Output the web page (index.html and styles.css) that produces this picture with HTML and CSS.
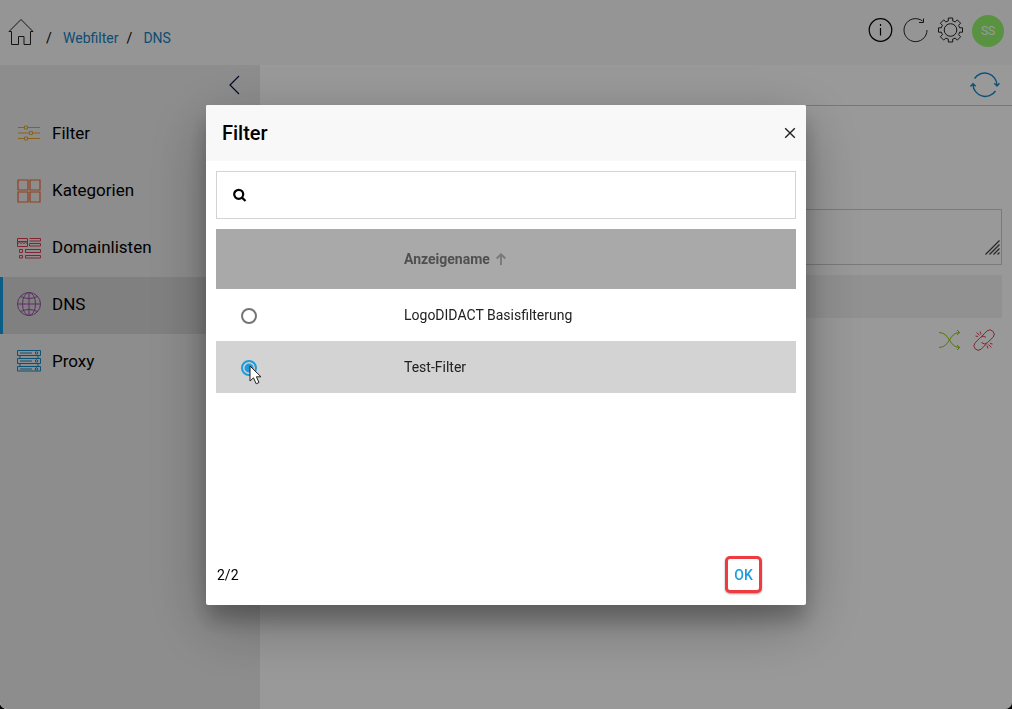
FILE: index.html
```html
<!DOCTYPE html>
<html lang="de">
<head>
<meta charset="utf-8">
<title>Webfilter – DNS</title>
<link rel="stylesheet" href="styles.css">
</head>
<body>
<div class="app">
  <header class="topbar">
    <nav class="breadcrumb" aria-label="Breadcrumb">
      <a href="#" class="home" aria-label="Startseite">
        <svg width="26" height="28" viewBox="0 0 26 28"><path d="M1 13.500 13 1.500 25 13.500H22.500V26.500H16V18.500H10.500V26.500H3.500V13.500Z"/></svg>
      </a>
      <span class="slash">/</span>
      <a href="#">Webfilter</a>
      <span class="slash">/</span>
      <a href="#">DNS</a>
    </nav>
    <div class="tools">
      <button type="button" class="icon-btn" aria-label="Information">
        <svg class="dark" width="25" height="25" viewBox="0 0 25 25"><circle cx="12.500" cy="12" r="11.300"/><path d="M12.500 10V17.500"/><path d="M12.500 6V8"/></svg>
      </button>
      <button type="button" class="icon-btn" aria-label="Neu laden">
        <svg width="25" height="25" viewBox="0 0 25 25"><path d="M24 12A11.500 11.500 0 1 1 19.500 3"/><path d="M16 4.500H20.500V.500"/></svg>
      </button>
      <button type="button" class="icon-btn" aria-label="Einstellungen">
        <svg width="26" height="26" viewBox="0 0 26 26"><circle cx="12.500" cy="12" r="6.300"/><path d="M10.300 0h4.400v2.900l2.500 1 2.100-2 3.300 3.300-2 2.100 1 2.500H24.500v4.400h-2.900l-1 2.500 2 2.100-3.300 3.300-2.100-2-2.500 1V24h-4.400v-2.900l-2.500-1-2.100 2-3.300-3.300 2-2.100-1-2.500H.500v-4.400h2.900l1-2.500-2-2.100 3.300-3.300 2.100 2 2.500-1Z"/></svg>
      </button>
      <button type="button" class="avatar">SS</button>
    </div>
  </header>

  <div class="body">
    <aside class="sidebar">
      <div class="collapse">
        <button type="button" class="icon-btn" aria-label="Menü einklappen">
          <svg class="navy" width="12" height="20" viewBox="0 0 12 20"><path d="M11 1 2 10 11 19"/></svg>
        </button>
      </div>
      <nav class="menu">
        <a href="#" class="item">
          <svg class="i-yellow" width="26" height="26" viewBox="0 0 26 26"><path d="M2 7.500H8M12 7.500H24M2 13H13M17 13H24M2 18.500H8M12 18.500H24"/><path d="M8.500 6h3v3h-3zM13.500 11.500h3v3h-3zM8.500 17h3v3h-3z"/></svg>
          <span>Filter</span>
        </a>
        <a href="#" class="item">
          <svg class="i-orange" width="26" height="26" viewBox="0 0 26 26"><path d="M2 3h10v10H2zM14 3h10v10H14zM2 15h10v10H2zM14 15h10v10H14z"/></svg>
          <span>Kategorien</span>
        </a>
        <a href="#" class="item">
          <svg class="i-red" width="26" height="26" viewBox="0 0 26 26"><path d="M1.500 4.500h10v8h-10z"/><path d="M2 9.500l1.500-1 1.500 1 1.500-1 1.500 1 1.500-1 1.500 1M2 7.500H11"/><path d="M24.500 4.500v2.500h-11M13.500 4.500h11M13.500 9.500h11v2.500h-11zM3.500 15.500h3v3h-3zM9.500 15.500h15v3h-15zM3.500 21.500h3v2.500h-3zM9.500 21.500h15v2.500h-15z"/></svg>
          <span>Domainlisten</span>
        </a>
        <a href="#" class="item active" aria-current="page">
          <svg class="i-purple" width="26" height="26" viewBox="0 0 26 26"><circle cx="13" cy="13" r="11.500"/><ellipse cx="13" cy="13" rx="6.500" ry="11.500"/><path d="M13 1.500v23M1.500 13h23M4.500 5.500q8.500 4 17 0M4.500 20.500q8.500-4 17 0"/></svg>
          <span>DNS</span>
        </a>
        <a href="#" class="item">
          <svg class="i-blue" width="26" height="26" viewBox="0 0 26 26"><path d="M1.500 2.500h23v5h-23zM1.500 10.500h23v5h-23zM1.500 18.500h23v4.500h-23z"/><path d="M4 5H16M4 13H16M4 21H16M4 8V10M22 8V10M4 16V18M22 16V18"/><circle cx="20.500" cy="5" r="1.200"/><circle cx="20.500" cy="13" r="1.200"/><circle cx="20.500" cy="21" r="1.200"/></svg>
          <span>Proxy</span>
        </a>
      </nav>
    </aside>

    <main class="main">
      <div class="toolbar">
        <button type="button" class="icon-btn" aria-label="Aktualisieren">
          <svg class="i-blue wide" width="30" height="28" viewBox="0 0 30 28"><path d="M4.500 7.500A12.300 12.300 0 0 1 27 14.500M24.300 12.300 27 15 29.500 12.300M25.500 20A12.300 12.300 0 0 1 3 13.500M.500 15.500 3 12.700 5.700 15.300"/></svg>
        </button>
      </div>
      <div class="content">
        <div class="note">
          <textarea aria-label="Beschreibung"></textarea>
          <svg class="grip" width="15" height="15" viewBox="0 0 15 15"><path d="M.500 14.500 14.500 .500M4.500 14.500l10-10M8.500 14.500l6-6M12.500 14.500l2-2"/></svg>
        </div>
        <div class="panel"></div>
        <div class="row-tools">
          <button type="button" class="icon-btn" aria-label="Zuordnen">
            <svg class="i-green" width="23" height="20" viewBox="0 0 23 20"><path d="M1 2.500C12 2.500 11 17.500 21.500 17.500M1 17.500C12 17.500 11 2.500 21.500 2.500M19 0l2.700 2.500L19 5M19 15l2.700 2.500L19 20"/></svg>
          </button>
          <button type="button" class="icon-btn" aria-label="Verknüpfung lösen">
            <svg class="i-red" width="24" height="24" viewBox="0 0 24 24"><path d="M9.500 8.500 15.200 2.800A4.400 4.400 0 0 1 21.300 9L15.500 14.700A4.400 4.400 0 0 1 9.500 14.500"/><path d="M14 9.300A4.400 4.400 0 0 0 8.300 9.500L2.800 15.200A4.400 4.400 0 0 0 9 21.300L14.500 15.800"/><path d="M8 3.500 9 6.500M4.500 4.500 7.500 7.500M3.500 8 6 8.500M16 20.500 15 17.500M19.500 19.500 16.500 16.500M20.500 16 18 15.500"/></svg>
          </button>
        </div>
      </div>
    </main>
  </div>

  <div class="overlay">
    <section class="dialog" role="dialog" aria-modal="true" aria-labelledby="dialog-title">
      <header class="dialog-head">
        <h1 id="dialog-title">Filter</h1>
        <button type="button" class="icon-btn" aria-label="Schließen">
          <svg class="close" width="12" height="12" viewBox="0 0 12 12"><path d="M1.200 1.200 10.800 10.800M10.800 1.200 1.200 10.800"/></svg>
        </button>
      </header>
      <div class="dialog-body">
        <label class="search">
          <svg width="14" height="14" viewBox="0 0 14 14"><circle cx="5.700" cy="6.300" r="4.500"/><path d="M9 9.600 12.500 13"/></svg>
          <input type="text" aria-label="Suchen">
        </label>
        <table class="grid">
          <thead>
            <tr>
              <th class="pick"></th>
              <th><span class="sort">Anzeigename <svg width="10" height="12" viewBox="0 0 10 12"><path d="M5 12V1.500M.700 5.500 5 1.200 9.300 5.500"/></svg></span></th>
            </tr>
          </thead>
          <tbody>
            <tr>
              <td class="pick"><input type="radio" name="filter" id="f-basis"></td>
              <td><label for="f-basis">LogoDIDACT Basisfilterung</label></td>
            </tr>
            <tr class="selected">
              <td class="pick">
                <input type="radio" name="filter" id="f-test" checked>
                <svg class="cursor" width="13" height="20" viewBox="0 0 13 20"><path d="M1 1V16L4.500 12.800 7.200 18.800 10 17.500 7.400 11.800H12Z"/></svg>
              </td>
              <td><label for="f-test">Test-Filter</label></td>
            </tr>
          </tbody>
        </table>
      </div>
      <footer class="dialog-foot">
        <span>2/2</span>
        <button type="button" class="ok">OK</button>
      </footer>
    </section>
  </div>
</div>
</body>
</html>
```
FILE: styles.css
```css
* { box-sizing: border-box; }

body {
  margin: 0;
  background: #000;
  color: #000;
  font-family: Roboto, "Noto Sans", sans-serif;
  font-size: 14px;
}

a { color: inherit; text-decoration: none; }

svg { display: block; fill: none; stroke: #222; stroke-width: 1; overflow: visible; }
svg.dark { stroke: #000; stroke-width: 1.2; }
svg.navy { stroke: #001040; stroke-width: 1.2; }
.i-yellow { stroke: #e8a628; }
.i-orange { stroke: #f06a32; stroke-width: 1.2; }
.i-red { stroke: #dc3c50; }
.i-purple { stroke: #9b4fa8; }
.i-blue { stroke: #1489c6; }
.i-green { stroke: #84c800; }
.wide { stroke-width: 1.4; }

.icon-btn {
  display: block;
  padding: 0;
  border: 0;
  background: none;
}

.app {
  display: flex;
  flex-direction: column;
  min-height: 100vh;
  overflow: hidden;
  border-radius: 0 0 7px 7px;
  background: #fff;
}

.topbar {
  display: flex;
  justify-content: space-between;
  height: 65px;
  padding: 0 8px;
  background: #f8f8f8;
}

.breadcrumb {
  display: flex;
  align-items: center;
  gap: 12px;
  padding-top: 11px;
  color: #1482be;
}
.breadcrumb .home { padding-bottom: 12px; }
.slash { width: 5px; color: #000; }
.breadcrumb a + .slash { margin-left: -4px; }
.breadcrumb .home + .slash { margin-left: 0; }

.tools {
  display: flex;
  align-items: center;
  gap: 10px;
  padding-bottom: 4px;
}
.avatar {
  width: 32px;
  height: 32px;
  margin-left: -2px;
  padding: 0;
  border: 0;
  border-radius: 50%;
  background: #94f56d;
  color: #fff;
  font: 12px Roboto, sans-serif;
}

.body { display: flex; flex: 1; }

.sidebar { flex: 0 0 260px; background: #ebebeb; }
.collapse {
  display: flex;
  justify-content: flex-end;
  align-items: center;
  height: 40px;
  padding-right: 20px;
}
.menu { display: flex; flex-direction: column; padding-top: 1px; }
.item {
  display: flex;
  align-items: center;
  gap: 10px;
  height: 57px;
  padding: 0 0 4px 13px;
  border-left: 3px solid transparent;
  font-size: 17px;
}
.active { border-left-color: #0f9be0; background: #d6d6d6; }

.main { flex: 1; min-width: 0; }
.toolbar {
  display: flex;
  justify-content: flex-end;
  align-items: center;
  height: 41px;
  padding-right: 12px;
  border-bottom: 1px solid #c8c8c8;
}
.content { padding: 103px 10px 0; }
.note { position: relative; }
.note textarea {
  display: block;
  width: 100%;
  height: 56px;
  border: 1px solid #ccc;
  background: #fff;
  resize: none;
}
.grip { position: absolute; right: 2px; bottom: 10px; stroke: #444; stroke-width: 1.3; }
.panel { height: 43px; margin-top: 10px; background: #f2f2f2; }
.row-tools {
  display: flex;
  justify-content: flex-end;
  align-items: center;
  gap: 11px;
  padding: 10px 6px 0 0;
}

.overlay {
  position: fixed;
  inset: 0;
  display: flex;
  align-items: center;
  justify-content: center;
  padding-top: 1px;
  border-radius: 0 0 7px 7px;
  background: rgba(0, 0, 0, .4);
}
.dialog {
  display: flex;
  flex-direction: column;
  width: 600px;
  max-width: 100%;
  min-height: 500px;
  border-radius: 2px;
  background: #fff;
  box-shadow: 0 19px 60px rgba(0, 0, 0, .3), 0 15px 20px rgba(0, 0, 0, .22);
}
.dialog-head {
  display: flex;
  align-items: center;
  justify-content: space-between;
  height: 56px;
  padding: 0 10px 0 16px;
  border-radius: 2px 2px 0 0;
  background: #f8f8f8;
}
.dialog-head h1 { margin: 0; font-size: 20px; font-weight: 500; }
.close { stroke: #222; stroke-width: 1.4; }

.dialog-body { flex: 1; padding: 10px; }
.search {
  display: flex;
  align-items: center;
  gap: 10px;
  height: 48px;
  margin-bottom: 10px;
  padding: 0 16px;
  border: 1px solid #d3d3d3;
}
.search svg { stroke: #000; stroke-width: 2.2; }
.search input {
  flex: 1;
  border: 0;
  outline: 0;
  background: none;
  font: 14px Roboto, sans-serif;
}

.grid { width: 100%; border-collapse: collapse; table-layout: fixed; }
.grid th, .grid td { padding: 0 24px; text-align: left; }
.grid .pick { position: relative; width: 164px; }
.grid thead tr { height: 60px; background: #a9a9a9; color: #505050; }
.grid th { font-weight: 700; }
.grid tbody tr { height: 52px; color: #212121; }
.grid .selected { background: #d3d3d3; }
.sort { display: flex; align-items: center; gap: 6px; }
.sort svg { stroke: #777; stroke-width: 1.8; }

.grid input {
  display: block;
  appearance: none;
  width: 16px;
  height: 16px;
  margin: 2px 0 0 1px;
  border: 2px solid #757575;
  border-radius: 50%;
}
.grid input:checked {
  border-color: #1e9bdc;
  background: radial-gradient(circle, #1e9bdc 4px, transparent 5px);
}
.cursor { position: absolute; left: 33px; top: 24px; fill: #fff; stroke: #222; }

.dialog-foot {
  display: flex;
  align-items: center;
  justify-content: space-between;
  padding: 0 44px 12px 11px;
}
.ok {
  width: 37px;
  height: 37px;
  padding: 0;
  border: 3px solid #ee3b3f;
  border-radius: 5px;
  background: #fff;
  box-shadow: 0 1px 2px rgba(0, 0, 0, .4);
  color: #1e9bdc;
  font: 500 14px Roboto, sans-serif;
}
```
